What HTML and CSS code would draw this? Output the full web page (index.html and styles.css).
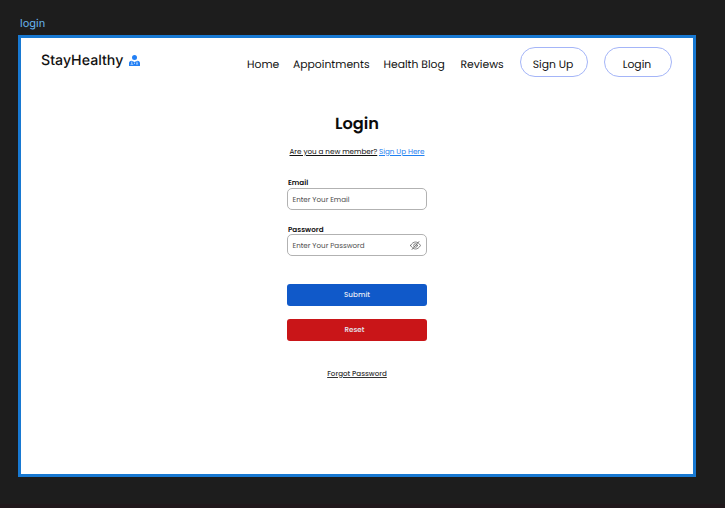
FILE: index.html
```
<!DOCTYPE html>
<html lang="en">
<head>
<meta charset="utf-8">
<title>StayHealthy - Login</title>
<link rel="stylesheet" href="styles.css">
</head>
<body>
<div class="frame-label">login</div>
<div class="frame">
  <header class="header">
    <div class="brand">
      <span class="brand-name">StayHealthy</span>
      <svg class="brand-icon" viewBox="0 0 22 22" fill="#2380f5">
        <circle cx="11" cy="5" r="5"/>
        <path d="M0 22v-5c0-3.500 2-5.500 5-5.500L11 14l6-2.500c3 0 5 2 5 5.500v5z"/>
        <path d="M5.500 13v4M4 19.500v-1.500h3.500v1.500M16 13v4M11 15v3" fill="none" stroke="#fff" stroke-width="1.200"/>
        <circle cx="16" cy="17.800" r="1.300" fill="#fff"/>
      </svg>
    </div>
    <nav class="nav">
      <a class="link home">Home</a>
      <a class="link appointments">Appointments</a>
      <a class="link blog">Health Blog</a>
      <a class="link reviews">Reviews</a>
      <a class="pill"><span>Sign Up</span></a>
      <a class="pill"><span>Login</span></a>
    </nav>
  </header>
  <main class="main">
    <h1 class="title">Login</h1>
    <p class="member"><u class="question">Are you a new member?</u><a class="here">Sign Up Here</a></p>
    <form class="form">
      <label class="label">Email</label>
      <div class="field"><span>Enter Your Email</span></div>
      <label class="label label-password">Password</label>
      <div class="field"><span>Enter Your Password</span>
        <svg class="eye" viewBox="0 0 22 22" fill="none" stroke="#666" stroke-width="1.600" stroke-linecap="round">
          <path d="M1 11C4 6 7.500 4 11 4s7 2 10 7c-3 5-6.500 7-10 7S4 16 1 11z"/>
          <circle cx="11" cy="11" r="3.600"/>
          <path d="M4 19L18 3"/>
        </svg>
      </div>
      <div class="button submit">Submit</div>
      <div class="button reset">Reset</div>
    </form>
    <a class="forgot">Forgot Password</a>
  </main>
</div>
</body>
</html>
```
FILE: styles.css
```
* { box-sizing: border-box; }
body {
  margin: 0;
  height: 508px;
  padding: 0 0 0 18px;
  background: #1d1d1d;
  border-bottom: 4px solid #20181b;
  font-family: Poppins, Inter, sans-serif;
  color: #111;
  overflow: hidden;
  text-rendering: geometricPrecision;
}
.frame-label {
  height: 35px;
  padding: 16px 0 0 2px;
  font: 11px/14px Inter, sans-serif;
  color: #67b4ec;
}
.frame {
  width: 678px;
  height: 442px;
  background: #fff;
  border: 3px solid #1879d2;
}
.header {
  display: flex;
  justify-content: space-between;
  height: 62px;
  padding: 9px 21px 0 20px;
}
.brand { display: flex; height: 28px; padding-top: 4px; }
.brand-name { width: 88px; font: 500 14.2px/20px Inter, sans-serif; color: #111; }
.brand-icon { width: 11px; height: 11px; margin-top: 4px; }
.nav { display: flex; font-size: 10.8px; line-height: 16px; white-space: nowrap; }
.link { padding-top: 10px; }
.home { width: 46px; }
.appointments { width: 90.5px; }
.blog { width: 77px; }
.reviews { width: 59.5px; }
.pill {
  display: flex;
  justify-content: center;
  width: 68px;
  height: 30px;
  padding: 9px 2px 0 0;
  border: 1px solid #a4b5f8;
  border-radius: 15px;
}
.pill + .pill { margin-left: 16px; }
.main { display: flex; flex-direction: column; align-items: center; }
.title { margin: 14px 0 0; font-size: 16.2px; font-weight: 600; line-height: 20px; color: #0b0b0b; }
.member { display: flex; justify-content: space-between; width: 135px; margin: 12px 0 0; font-size: 7.2px; line-height: 12px; white-space: nowrap; }
.here { color: #1f80f0; text-decoration: underline; }
.form { width: 140px; margin-top: 20px; }
.label { display: block; height: 10px; padding-left: 1px; font-size: 7.2px; font-weight: 600; line-height: 10px; }
.field {
  display: flex;
  align-items: center;
  justify-content: space-between;
  height: 22px;
  padding: 0 5px 0 4.5px;
  border: 1px solid #b2b2b2;
  border-radius: 5px;
  font-size: 7.15px;
  color: #505050;
}
.field span { padding-top: 2px; }
.label-password { height: 9px; margin-top: 15px; }
.eye { width: 11px; height: 11px; }
.button {
  height: 22px;
  border-radius: 3px;
  font-size: 7.2px;
  font-weight: 500;
  line-height: 22px;
  text-align: center;
  color: #e6ebf5;
}
.submit { margin-top: 28px; background: #1059c9; }
.reset { margin-top: 13px; padding-right: 5px; background: #c91518; }
.forgot { margin-top: 27px; font-size: 7.15px; font-weight: 500; line-height: 12px; text-decoration: underline; color: #333; }
```
